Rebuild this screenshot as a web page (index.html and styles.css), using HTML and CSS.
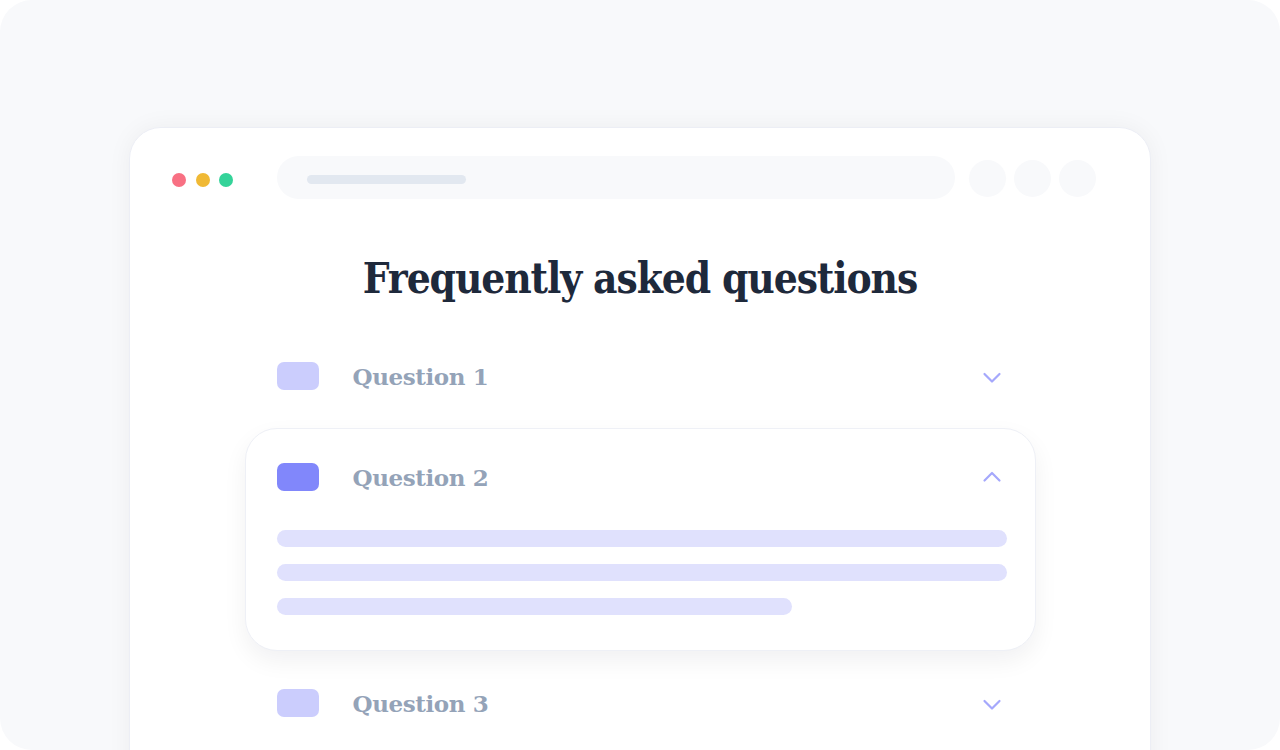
FILE: index.html
```html
<!DOCTYPE html>
<html lang="en">
<head>
<meta charset="utf-8">
<title>FAQ</title>
<link rel="stylesheet" href="styles.css">
</head>
<body>
<div class="frame">
  <div class="window">
    <div class="toolbar">
      <div class="dots">
        <span class="dot red"></span>
        <span class="dot yellow"></span>
        <span class="dot green"></span>
      </div>
      <div class="urlbar"><span class="urltext"></span></div>
      <div class="actions">
        <span class="circle"></span>
        <span class="circle"></span>
        <span class="circle"></span>
      </div>
    </div>
    <h1 class="title">Frequently asked questions</h1>
    <div class="faq">
      <div class="item">
        <div class="row">
          <span class="badge"></span>
          <span class="q">Question 1</span>
          <svg class="chev" viewBox="0 0 24 24" width="24" height="24"><path d="M4.5 10l7.5 7.5 7.5-7.5"/></svg>
        </div>
      </div>
      <div class="item open">
        <div class="row">
          <span class="badge active"></span>
          <span class="q">Question 2</span>
          <svg class="chev" viewBox="0 0 24 24" width="24" height="24"><path d="M4.5 15.5l7.5-7.5 7.5 7.5"/></svg>
        </div>
        <div class="answer">
          <span class="line"></span>
          <span class="line"></span>
          <span class="line short"></span>
        </div>
      </div>
      <div class="item">
        <div class="row">
          <span class="badge"></span>
          <span class="q">Question 3</span>
          <svg class="chev" viewBox="0 0 24 24" width="24" height="24"><path d="M4.5 10l7.5 7.5 7.5-7.5"/></svg>
        </div>
      </div>
    </div>
  </div>
</div>
</body>
</html>
```
FILE: styles.css
```css
html, body {
  margin: 0;
  padding: 0;
  background: #ffffff;
}
.frame {
  width: 1280px;
  height: 750px;
  box-sizing: border-box;
  background: #f8f9fb;
  border-radius: 32px;
  overflow: hidden;
  padding-top: 127px;
}
.window {
  width: 1022px;
  height: 700px;
  margin: 0 auto;
  box-sizing: border-box;
  background: #ffffff;
  border: 1px solid #eceef5;
  border-radius: 32px;
  box-shadow: 0 0 24px rgba(15, 23, 42, 0.05);
}
.toolbar {
  display: flex;
  align-items: center;
  padding: 28px 54px 0 42px;
}
.dots {
  display: flex;
  gap: 9.5px;
  margin-top: 4px;
}
.dot {
  width: 14px;
  height: 14px;
  border-radius: 50%;
}
.red { background: #f87083; }
.yellow { background: #f0b935; }
.green { background: #34d399; }
.urlbar {
  margin-left: 44px;
  width: 678px;
  height: 43px;
  border-radius: 22px;
  background: #f8f9fb;
  display: flex;
  align-items: center;
  padding-left: 30px;
  box-sizing: border-box;
}
.urltext {
  width: 159px;
  height: 9px;
  border-radius: 5px;
  background: #e2e8f0;
  margin-top: 3px;
}
.actions {
  display: flex;
  gap: 8px;
  margin-left: 14px;
  margin-top: 2px;
}
.circle {
  width: 37px;
  height: 37px;
  border-radius: 50%;
  background: #f8f9fb;
}
.title {
  margin: 52px 0 0;
  text-align: center;
  font-family: "DejaVu Serif", "Liberation Serif", serif;
  font-stretch: condensed;
  font-weight: 700;
  font-size: 42px;
  line-height: 56px;
  color: #1e293b;
  letter-spacing: -1.1px;
}
.faq {
  width: 791px;
  margin: 20px auto 0;
  display: flex;
  flex-direction: column;
  gap: 3px;
}
.item {
  border: 1px solid transparent;
  border-radius: 32px;
  padding: 34px 31px 34px 31px;
}
.item.open {
  background: #ffffff;
  border-color: #eef0f6;
  box-shadow: 0 10px 24px rgba(15, 23, 42, 0.06);
  padding-bottom: 35px;
}
.row {
  display: flex;
  align-items: center;
  height: 28px;
}
.badge {
  width: 42px;
  height: 28px;
  border-radius: 7px;
  background: #cbcdfd;
  flex: none;
}
.badge.active {
  background: #8187fb;
}
.q {
  margin-left: 34px;
  font-family: "DejaVu Serif", "Liberation Serif", serif;
  font-weight: 700;
  font-size: 23px;
  color: #94a3b8;
  letter-spacing: -0.4px;
  flex: 1;
}
.chev {
  flex: none;
  fill: none;
  stroke: #a5a8fc;
  stroke-width: 2.2;
  stroke-linecap: round;
  stroke-linejoin: round;
}
.answer {
  margin-top: 39px;
  margin-right: -3px;
  display: flex;
  flex-direction: column;
  gap: 17px;
}
.line {
  display: block;
  height: 17px;
  border-radius: 9px;
  background: #e0e1fd;
}
.line.short {
  width: 515px;
}
```
